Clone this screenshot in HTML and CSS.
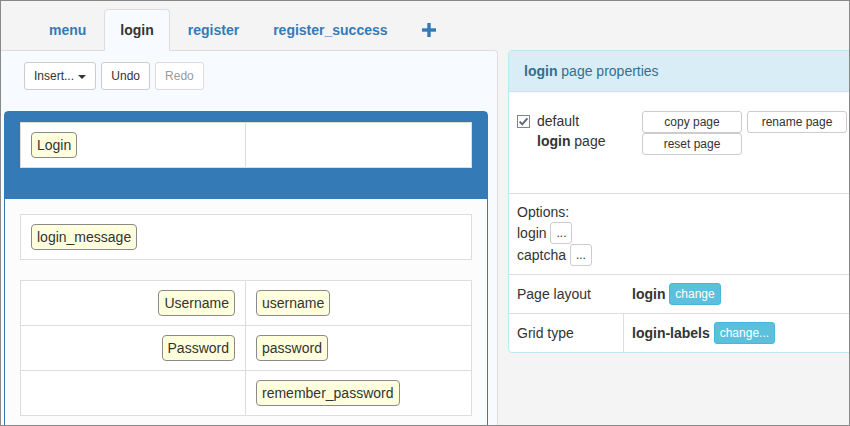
FILE: index.html
```html
<!DOCTYPE html>
<html>
<head>
<meta charset="utf-8">
<link rel="stylesheet" href="styles.css">
</head>
<body>
<div class="frame">
  <div class="left">
    <ul class="tabs">
      <li class="tab">menu</li>
      <li class="tab active">login</li>
      <li class="tab">register</li>
      <li class="tab">register_success</li>
      <li class="tab plus"><svg width="14" height="14" viewBox="0 0 14 14"><rect x="5.3" y="0" width="3.4" height="14" fill="#337ab7"/><rect x="0" y="5.3" width="14" height="3.4" fill="#337ab7"/></svg></li>
    </ul>
    <div class="tab-content">
      <div class="toolbar">
        <button class="btn ins">Insert... <span class="caret"></span></button>
        <button class="btn">Undo</button>
        <button class="btn disabled">Redo</button>
      </div>
      <div class="page">
        <div class="page-head">
          <div class="grid">
            <div class="cell"><span class="chip">Login</span></div>
            <div class="cell divider"></div>
          </div>
        </div>
        <div class="page-body">
          <div class="grid single">
            <div class="cell"><span class="chip">login_message</span></div>
          </div>
          <div class="grid">
            <div class="cell right"><span class="chip">Username</span></div>
            <div class="cell divider"><span class="chip">username</span></div>
            <div class="cell right top"><span class="chip">Password</span></div>
            <div class="cell divider top"><span class="chip">password</span></div>
            <div class="cell right top"></div>
            <div class="cell divider top"><span class="chip">remember_password</span></div>
          </div>
        </div>
      </div>
    </div>
  </div>
  <div class="right-col">
    <div class="panel">
      <div class="panel-head"><b>login</b> page properties</div>
      <div class="prow first">
        <div class="pinfo">
          <svg class="check" width="13" height="13" viewBox="0 0 13 13"><rect x="0.5" y="0.5" width="12" height="12" fill="#fff" stroke="#858585"/><path d="M2.6 6.6 L5.2 9.3 L10.4 3.3" fill="none" stroke="#5e6a78" stroke-width="2"/></svg>
          <div class="plabel">default<br><b>login</b> page</div>
        </div>
        <div class="pbtns">
          <button class="btn xs wide">copy page</button>
          <button class="btn xs wide">rename page</button>
          <button class="btn xs wide">reset page</button>
        </div>
      </div>
      <div class="prow options">
        <div>Options:</div>
        <div class="oline">login <button class="btn xs">...</button></div>
        <div class="oline">captcha <button class="btn xs">...</button></div>
      </div>
      <div class="prow kv">
        <div class="key">Page layout</div>
        <div class="val nob"><b>login</b> <button class="btn xs info">change</button></div>
      </div>
      <div class="prow kv last">
        <div class="key">Grid type</div>
        <div class="val"><b>login-labels</b> <button class="btn xs info">change...</button></div>
      </div>
    </div>
  </div>
</div>
</body>
</html>
```
FILE: styles.css
```css
html, body {
  margin: 0;
  padding: 0;
}
body {
  font-family: "Liberation Sans", Arial, sans-serif;
  font-size: 14px;
  color: #333;
}
.frame {
  width: 850px;
  height: 426px;
  box-sizing: border-box;
  border: 1px solid #888;
  background: #f4f4f4;
  display: flex;
  overflow: hidden;
}
.left {
  width: 497px;
  flex: none;
  display: flex;
  flex-direction: column;
}
.tabs {
  list-style: none;
  margin: 0;
  padding: 8px 0 0 32px;
  display: flex;
  height: 41px;
}
.tab {
  padding: 10px 15px;
  line-height: 20px;
  border: 1px solid transparent;
  border-radius: 4px 4px 0 0;
  margin-right: 2px;
  font-weight: bold;
  color: #337ab7;
  height: 20px;
  position: relative;
  z-index: 1;
}
.tab.active {
  color: #333;
  background: #f7fbff;
  border-color: #ddd;
  border-bottom-color: #f7fbff;
}
.tab.plus {
  padding: 13px 15px 7px 15px;
}
.tab.plus svg {
  display: block;
}
.tab-content {
  flex: 1;
  background: #f7fbff;
  border-top: 1px solid #ddd;
  border-right: 1px solid #ddd;
  border-top-right-radius: 4px;
}
.toolbar {
  padding: 11px 0 0 23px;
  display: flex;
  gap: 5px;
}
.btn {
  font-family: "Liberation Sans", Arial, sans-serif;
  font-size: 12px;
  color: #333;
  background: #fff;
  border: 1px solid #ccc;
  border-radius: 3px;
  padding: 0 10px;
  height: 28px;
  line-height: 18px;
  margin: 0;
}
.toolbar .btn {
  padding: 0 9px;
}
.btn.disabled {
  color: #9a9a9a;
  border-color: #dcdcdc;
}
.caret {
  display: inline-block;
  width: 0;
  height: 0;
  border-top: 4px solid #333;
  border-left: 4px solid transparent;
  border-right: 4px solid transparent;
  vertical-align: middle;
  margin-left: 1px;
}
.page {
  margin: 21px 0 0 3px;
  width: 484px;
  border: 1px solid #337ab7;
  border-radius: 4px 4px 0 0;
  height: 400px;
  box-sizing: border-box;
  background: #fcfcfc;
}
.page-head {
  background: #337ab7;
  padding: 10px 15px 31px 15px;
}
.page-body {
  padding: 15px 15px 0 15px;
  display: flex;
  flex-direction: column;
  gap: 20px;
}
.grid {
  display: grid;
  grid-template-columns: 224px 1fr;
  border: 1px solid #ddd;
  background: #fff;
}
.grid.single {
  grid-template-columns: 1fr;
}
.cell {
  height: 44px;
  padding: 0 10px;
  display: flex;
  align-items: center;
  box-sizing: border-box;
}
.cell.right {
  justify-content: flex-end;
}
.cell.divider {
  border-left: 1px solid #ddd;
}
.cell.top {
  border-top: 1px solid #ddd;
  height: 45px;
}
.chip {
  display: inline-block;
  background: #ffffdd;
  border: 1px solid #8a8a8a;
  border-radius: 4px;
  padding: 2px 5px;
  line-height: 20px;
  font-size: 14px;
  color: #333;
}
.right-col {
  margin: 49px 0 0 10px;
  flex: none;
}
.panel {
  width: 360px;
  border: 1px solid #bce8f1;
  border-radius: 4px;
  background: #fff;
}
.panel-head {
  background: #d9edf7;
  color: #31708f;
  padding: 10px 15px;
  line-height: 20px;
  border-bottom: 1px solid #bce8f1;
  border-radius: 3px 3px 0 0;
}
.prow {
  border-bottom: 1px solid #ddd;
  padding: 8px;
  line-height: 20px;
}
.prow.first {
  display: flex;
  height: 102px;
  box-sizing: border-box;
  padding: 19px 8px 0 8px;
}
.pinfo {
  width: 125px;
  display: flex;
  align-items: flex-start;
}
.check {
  margin: 4px 7px 0 0;
  flex: none;
}
.pbtns {
  width: 210px;
  display: flex;
  flex-wrap: wrap;
  column-gap: 5px;
  row-gap: 0;
  align-content: flex-start;
}
.btn.xs {
  height: 22px;
  padding: 0 5px;
  line-height: 18px;
}
.btn.wide {
  width: 100px;
}
.oline {
  height: 22px;
  line-height: 22px;
}
.oline .btn {
  vertical-align: top;
}
.prow.kv {
  display: flex;
  padding: 0;
  height: 39px;
  box-sizing: border-box;
}
.prow.last {
  border-bottom: none;
  height: 38px;
}
.key {
  width: 98px;
  padding: 0 8px;
  line-height: 38px;
  flex: none;
}
.val {
  border-left: 1px solid #ddd;
  padding: 8px;
  line-height: 22px;
}
.val.nob {
  border-left-color: transparent;
}
.val .btn {
  vertical-align: top;
}
.btn.info {
  background: #5bc0de;
  border-color: #46b8da;
  color: #fff;
}
```
